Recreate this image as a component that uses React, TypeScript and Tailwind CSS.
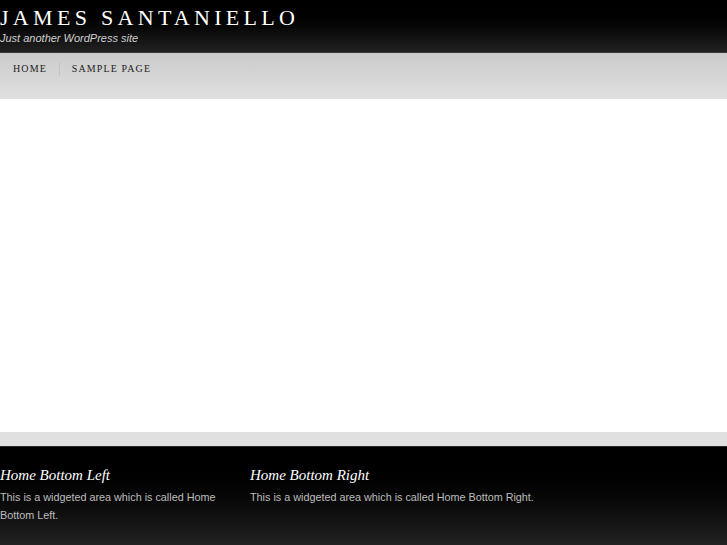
const serif = { fontFamily: '"Liberation Serif", "Times New Roman", serif' };

export default function App() {
  return (
    <div className="min-h-[545px] w-full bg-white flex flex-col" style={{ fontFamily: '"Liberation Sans", Arial, sans-serif' }}>
      <header className="h-[53px] bg-gradient-to-b from-[#000000] to-[#222222] border-b border-[#3a3a3a] pt-[5px]">
        <h1 className="text-[22px] leading-[26px] tracking-[4.3px] text-white" style={serif}>
          JAMES SANTANIELLO
        </h1>
        <p className="text-[11px] leading-[14px] italic text-[#cfcfcf]">Just another WordPress site</p>
      </header>

      <nav className="h-[46px] bg-gradient-to-b from-[#cbcbcb] to-[#e0e0e0] flex items-start pt-[9px] pl-[1px]">
        <ul className="flex items-center text-[10px] tracking-[1.1px] text-[#222] font-medium" style={serif}>
          <li className="px-[12px] leading-[12px]">HOME</li>
          <li className="w-px h-[14px] bg-[#eeeeee] border-l border-[#c4c4c4]" />
          <li className="px-[12px] leading-[12px]">SAMPLE PAGE</li>
        </ul>
      </nav>

      <main className="h-[333px] bg-white" />

      <div className="h-[15px] bg-[#e0e0e0] border-b border-[#2a2a2a]" />

      <footer className="flex-1 bg-gradient-to-b from-[#000000] to-[#222222] pt-[19px] flex">
        <section className="w-[230px] mr-[20px]">
          <h4 className="text-[15px] leading-[18px] italic text-white" style={serif}>Home Bottom Left</h4>
          <p className="mt-[4px] text-[10.8px] leading-[18px] text-[#bdbdbd]">
            This is a widgeted area which is called Home Bottom Left.
          </p>
        </section>
        <section className="w-[300px]">
          <h4 className="text-[15px] leading-[18px] italic text-white" style={serif}>Home Bottom Right</h4>
          <p className="mt-[4px] text-[10.8px] leading-[18px] text-[#bdbdbd]">
            This is a widgeted area which is called Home Bottom Right.
          </p>
        </section>
      </footer>
    </div>
  );
}
